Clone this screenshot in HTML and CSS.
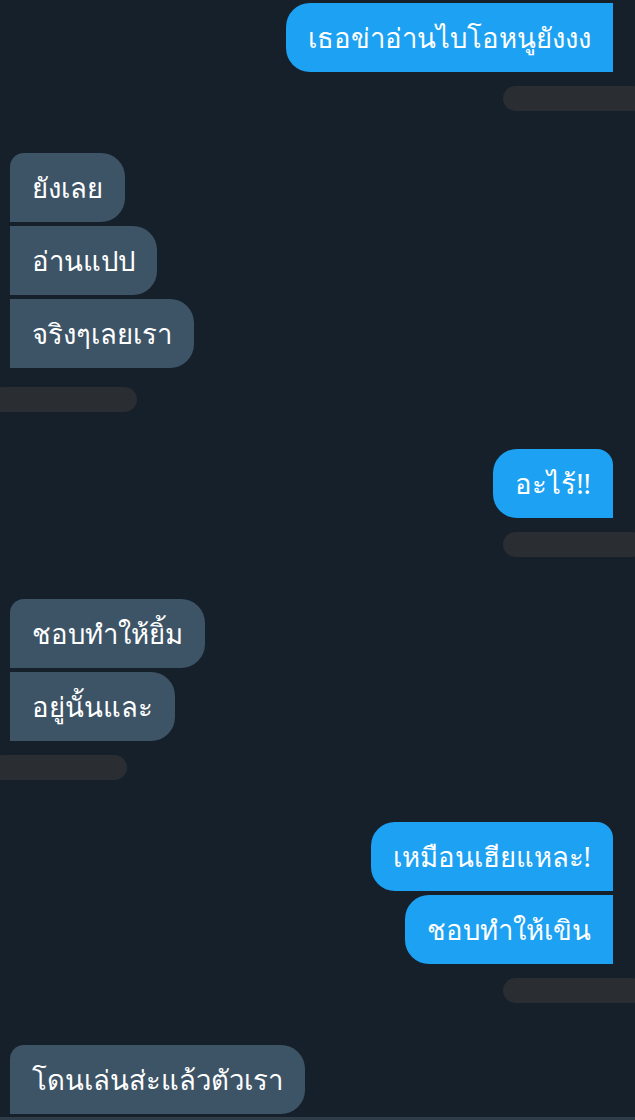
FILE: index.html
```html
<!DOCTYPE html>
<html lang="th">
<head>
  <meta charset="UTF-8">
  <title>แชท</title>
  <link rel="stylesheet" href="styles.css">
</head>
<body>
<div class="chat">
  <div class="group me">
    <div class="bubble first-cut">เธอข่าอ่านไบโอหนูยังงง</div>
    <div class="stamp"></div>
  </div>

  <div class="group them">
    <div class="bubble top">ยังเลย</div>
    <div class="bubble mid">อ่านแปป</div>
    <div class="bubble mid">จริงๆเลยเรา</div>
    <div class="stamp wide"></div>
  </div>

  <div class="group me short-gap">
    <div class="bubble top">อะไร้!!</div>
    <div class="stamp"></div>
  </div>

  <div class="group them">
    <div class="bubble top">ชอบทำให้ยิ้ม</div>
    <div class="bubble mid">อยู่นั้นและ</div>
    <div class="stamp"></div>
  </div>

  <div class="group me">
    <div class="bubble top">เหมือนเฮียแหละ!</div>
    <div class="bubble mid">ชอบทำให้เขิน</div>
    <div class="stamp"></div>
  </div>

  <div class="group them">
    <div class="bubble top">โดนเล่นส่ะแล้วตัวเรา</div>
  </div>
</div>
<div class="bottom-line"></div>
</body>
</html>
```

FILE: styles.css
```css
* {
  margin: 0;
  padding: 0;
  box-sizing: border-box;
}

html,
body {
  height: 100%;
}

body {
  background-color: #16202a;
  font-family: "Noto Sans", sans-serif;
  color: #fff;
  overflow: hidden;
  position: relative;
}

.chat {
  display: flex;
  flex-direction: column;
  padding-top: 3px;
}

.group {
  display: flex;
  flex-direction: column;
  gap: 4px;
  margin-bottom: 42px;
}

.group.short-gap {
  margin-top: -5px;
}

.group.me {
  align-items: flex-end;
  padding-right: 22px;
}

.group.them {
  align-items: flex-start;
  padding-left: 10px;
}

.bubble {
  height: 69px;
  display: flex;
  align-items: center;
  padding: 0 22px;
  font-size: 27.5px;
  line-height: 1;
  white-space: nowrap;
}

.me .bubble {
  background-color: #1da1f2;
  border-radius: 24px 16px 0 24px;
}

.me .bubble.first-cut {
  border-radius: 24px 0 0 24px;
}

.me .bubble.mid {
  border-radius: 24px 0 0 24px;
}

.them .bubble {
  background-color: #3d5466;
  border-radius: 14px 24px 24px 0;
}

.them .bubble.mid {
  border-radius: 0 24px 24px 0;
}

.stamp {
  height: 25px;
  margin-top: 10px;
  border-radius: 13px;
  background-color: #2a2d31;
}

.me .stamp {
  width: 142px;
  margin-right: -32px;
}

.them .stamp {
  width: 137px;
  margin-left: -20px;
}

.them .stamp.wide {
  width: 147px;
  margin-top: 15px;
}

.bottom-line {
  position: absolute;
  left: 0;
  right: 0;
  bottom: 0;
  height: 3px;
  background-color: #2f3d49;
}
```
